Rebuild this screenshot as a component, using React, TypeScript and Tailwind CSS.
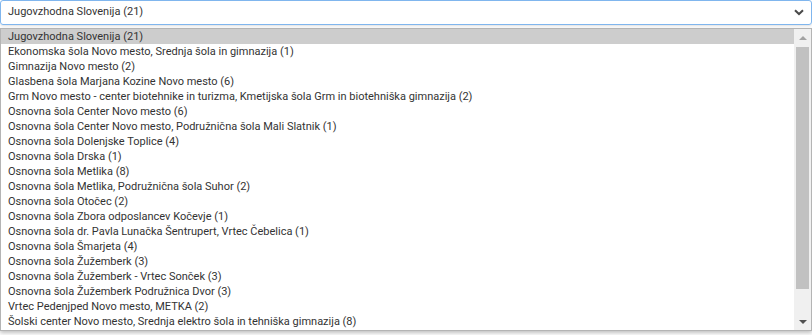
const items = [
  "Jugovzhodna Slovenija (21)",
  "Ekonomska šola Novo mesto, Srednja šola in gimnazija (1)",
  "Gimnazija Novo mesto (2)",
  "Glasbena šola Marjana Kozine Novo mesto (6)",
  "Grm Novo mesto - center biotehnike in turizma, Kmetijska šola Grm in biotehniška gimnazija (2)",
  "Osnovna šola Center Novo mesto (6)",
  "Osnovna šola Center Novo mesto, Podružnična šola Mali Slatnik (1)",
  "Osnovna šola Dolenjske Toplice (4)",
  "Osnovna šola Drska (1)",
  "Osnovna šola Metlika (8)",
  "Osnovna šola Metlika, Podružnična šola Suhor (2)",
  "Osnovna šola Otočec (2)",
  "Osnovna šola Zbora odposlancev Kočevje (1)",
  "Osnovna šola dr. Pavla Lunačka Šentrupert, Vrtec Čebelica (1)",
  "Osnovna šola Šmarjeta (4)",
  "Osnovna šola Žužemberk (3)",
  "Osnovna šola Žužemberk - Vrtec Sonček (3)",
  "Osnovna šola Žužemberk Podružnica Dvor (3)",
  "Vrtec Pedenjped Novo mesto, METKA (2)",
  "Šolski center Novo mesto, Srednja elektro šola in tehniška gimnazija (8)",
];

export default function App() {
  return (
    <div className="w-[812px] h-[335px] bg-white text-[11px] text-[#333]" style={{ fontFamily: "Roboto, 'Liberation Sans', sans-serif" }}>
      <div className="h-[25px] w-[812px] border border-[#80b6ee] rounded-[3px] flex items-center pl-[7px] pr-[6px] shadow-[0_1px_2px_rgba(0,0,0,0.12)]">
        <span className="flex-1">Jugovzhodna Slovenija (21)</span>
        <svg width="10" height="7" viewBox="0 0 10 7" className="mr-[1px]">
          <path d="M1 1.2 L5 5 L9 1.2" fill="none" stroke="#4a4a4a" strokeWidth="2" />
        </svg>
      </div>
      <div className="mt-[3px] w-[812px] h-[303px] border border-[#b4b4b4] flex shadow-[0_2px_4px_rgba(0,0,0,0.25)]">
        <div className="flex-1 flex flex-col">
          {items.map((t, i) => (
            <div key={i} className={`h-[15px] leading-[15px] pl-[7px] whitespace-nowrap ${i === 0 ? "bg-[#cdcdcd]" : ""}`}>
              {t}
            </div>
          ))}
        </div>
        <div className="w-[17px] bg-[#f0f0f0] flex flex-col items-center">
          <div className="h-[17px] w-full flex items-center justify-center">
            <svg width="8" height="4" viewBox="0 0 8 4"><path d="M0 4 L4 0 L8 4 Z" fill="#a3a3a3" /></svg>
          </div>
          <div className="mt-[1px] h-[242px] w-[13px] bg-[#c1c1c1]" />
          <div className="flex-1" />
          <div className="h-[17px] w-full flex items-center justify-center">
            <svg width="8" height="4" viewBox="0 0 8 4"><path d="M0 0 L8 0 L4 4 Z" fill="#505050" /></svg>
          </div>
        </div>
      </div>
    </div>
  );
}
